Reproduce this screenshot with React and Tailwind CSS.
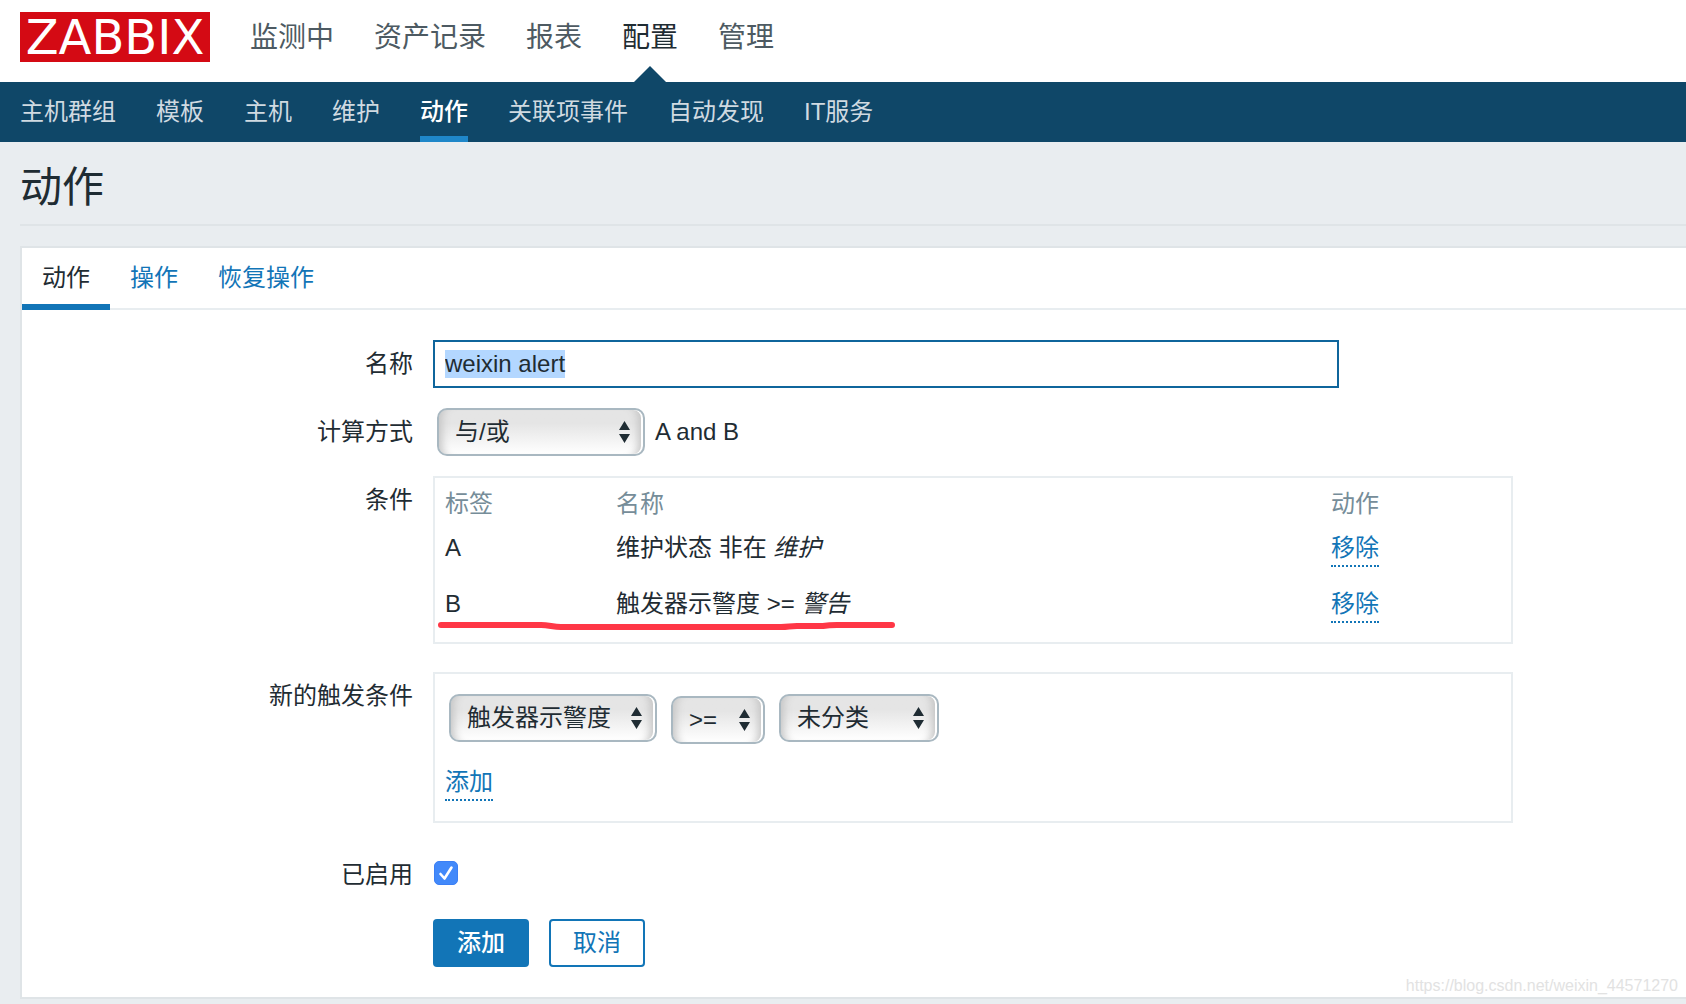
import { useEffect, useRef, useState } from "react";

const mainNav = ["监测中", "资产记录", "报表", "配置", "管理"];
const subNav = ["主机群组", "模板", "主机", "维护", "动作", "关联项事件", "自动发现", "IT服务"];
const tabs = ["动作", "操作", "恢复操作"];
const conditions = [
  { tag: "A", text: "维护状态 非在", value: "维护" },
  { tag: "B", text: "触发器示警度 >=", value: "警告" },
];

function Header() {
  return (
    <header className="bg-white">
      <div className="flex h-[82px] items-start gap-10 px-5">
        <a
          href="#home"
          className="mt-3 flex h-[50px] w-[190px] items-center justify-center bg-[#d40a14] text-[48px] leading-[50px] text-white"
          style={{ fontFamily: '"DejaVu Sans", sans-serif' }}
        >
          ZABBIX
        </a>
        <nav className="flex h-full gap-10 text-[28px] leading-[76px]">
          {mainNav.map((item) => (
            <a
              key={item}
              href="#main"
              className={item === "配置" ? "relative text-[#1f2c33]" : "text-[#4d5a62]"}
            >
              {item}
              {item === "配置" && (
                <svg className="absolute bottom-0 left-1/2 h-4 w-8 -translate-x-1/2" viewBox="0 0 32 16">
                  <path d="M16 0 32 16H0Z" fill="#0f4768" />
                </svg>
              )}
            </a>
          ))}
        </nav>
      </div>
      <nav className="flex h-[60px] gap-10 bg-[#0f4768] px-5 leading-[60px]">
        {subNav.map((item) => (
          <a
            key={item}
            href="#sub"
            className={
              item === "动作"
                ? "border-b-[6px] border-[#1f87c9] font-medium text-white"
                : "text-[#d0dae1]"
            }
          >
            {item}
          </a>
        ))}
      </nav>
    </header>
  );
}

function Row({ id, label, children, className = "" }) {
  return (
    <div className={`flex gap-5 pr-5 ${className}`}>
      <div className="w-[391px] shrink-0 text-right leading-[48px]">
        {label && <label htmlFor={id}>{label}</label>}
      </div>
      <div className="min-w-0 flex-1">{children}</div>
    </div>
  );
}

function Select({ id, label, value, className = "" }) {
  return (
    <span className={`relative block ${className}`}>
      <select
        id={id}
        aria-label={label}
        defaultValue={value}
        className="block h-12 w-full appearance-none rounded-[10px] border-2 border-[#a9b8c1] bg-linear-to-b from-[#e5e5e5] from-30% to-white pl-4 leading-[44px] text-[#1f2c33] shadow-[inset_-2px_0_0_#ffffff,inset_11px_0_8px_-8px_#c4c4c4,inset_-13px_0_8px_-8px_#c4c4c4] outline-none"
      >
        <option>{value}</option>
      </select>
      <svg
        className="pointer-events-none absolute top-[13px] right-[15px] h-[22px] w-[11px]"
        viewBox="0 0 11 22"
        fill="#1f2c33"
      >
        <path d="M5.5 0 11 9H0ZM0 13h11l-5.5 9Z" />
      </svg>
    </span>
  );
}

function DottedButton({ children }) {
  return (
    <button
      type="button"
      className="cursor-pointer border-b-2 border-dotted border-[#1275b7] leading-[34px] text-[#1275b7]"
    >
      {children}
    </button>
  );
}

function Conditions() {
  return (
    <div className="relative max-w-[1080px] border-2 border-[#e8edf0] px-[10px] py-1">
      <table className="w-full table-fixed text-left">
        <thead className="text-[#768d99]">
          <tr className="h-[44px]">
            <th className="w-[171px] font-normal">标签</th>
            <th className="font-normal">名称</th>
            <th className="w-[170px] font-normal">动作</th>
          </tr>
        </thead>
        <tbody>
          {conditions.map((c) => (
            <tr key={c.tag} className="h-[56px] align-top leading-[44px]">
              <td>{c.tag}</td>
              <td>
                {c.text} <em>{c.value}</em>
              </td>
              <td>
                <DottedButton>移除</DottedButton>
              </td>
            </tr>
          ))}
        </tbody>
      </table>
      <svg className="pointer-events-none absolute bottom-2 left-0 h-4 w-[464px]" viewBox="0 0 464 16" fill="none">
        <path
          d="M6 7H106C114 7 118 9 126 9H346C354 9 354 8 362 8H388C394 7 396 7 402 7H457"
          stroke="#ff3746"
          strokeWidth="6"
          strokeLinecap="round"
          strokeLinejoin="round"
        />
      </svg>
    </div>
  );
}

function ActionForm() {
  const nameRef = useRef(null);
  const [enabled, setEnabled] = useState(true);

  useEffect(() => {
    nameRef.current.focus({ preventScroll: true });
    nameRef.current.select();
  }, []);

  return (
    <form className="pt-[30px] pb-[30px]" onSubmit={(e) => e.preventDefault()}>
      <Row id="name" label="名称">
        <input
          id="name"
          ref={nameRef}
          type="text"
          defaultValue="weixin alert"
          className="block h-12 w-full max-w-[906px] border-2 border-[#0f659c] px-[10px] outline-none selection:bg-[#b3d7ff] selection:text-[#1f2c33]"
        />
      </Row>
      <Row id="calc" label="计算方式" className="mt-5">
        <div className="flex items-center gap-[10px] pl-1">
          <Select id="calc" value="与/或" className="w-52" />
          <span>A and B</span>
        </div>
      </Row>
      <Row label="条件" className="mt-5">
        <Conditions />
      </Row>
      <Row id="type" label="新的触发条件" className="mt-7">
        <div className="max-w-[1080px] border-2 border-[#e8edf0] px-[10px] pt-5 pb-5">
          <div className="flex items-start gap-[14px] px-1">
            <Select id="type" value="触发器示警度" className="w-52" />
            <Select label="运算符" value=">=" className="mt-0.5 w-[94px]" />
            <Select label="值" value="未分类" className="w-40" />
          </div>
          <div className="mt-5">
            <DottedButton>添加</DottedButton>
          </div>
        </div>
      </Row>
      <Row id="enabled" label="已启用" className="mt-7">
        <div className="flex h-11 items-center pl-px">
          <span className="relative flex">
            <input
              id="enabled"
              type="checkbox"
              checked={enabled}
              onChange={(e) => setEnabled(e.target.checked)}
              className="size-6 appearance-none rounded-[5px] border border-[#3b7ff5] bg-white checked:bg-[#4289fa]"
            />
            {enabled && (
              <svg
                className="pointer-events-none absolute inset-0 size-6"
                viewBox="0 0 24 24"
                fill="none"
                stroke="#fff"
                strokeWidth="2.6"
                strokeLinecap="round"
                strokeLinejoin="round"
              >
                <path d="M6.5 13 10.5 17.5 17.5 6.5" />
              </svg>
            )}
          </span>
        </div>
      </Row>
      <Row className="mt-5">
        <div className="flex gap-5">
          <button type="submit" className="h-12 w-24 rounded bg-[#1275b7] font-medium text-white">
            添加
          </button>
          <button type="button" className="h-12 w-24 rounded border-2 border-[#1275b7] bg-white text-[#1275b7]">
            取消
          </button>
        </div>
      </Row>
    </form>
  );
}

export default function App() {
  return (
    <div
      className="relative min-h-screen overflow-x-hidden bg-[#e9edf0] text-[24px] leading-[36px] text-[#1f2c33]"
      style={{ fontFamily: '"Liberation Sans", "Noto Sans CJK SC", sans-serif' }}
    >
      <Header />
      <main className="pl-5">
        <h1 className="h-[84px] border-b-2 border-[#dfe4e7] pt-2 text-[42px] leading-[76px]">动作</h1>
        <section className="relative mt-5 border-y-2 border-l-2 border-[#dfe4e7] bg-white">
          <div className="flex h-[62px] leading-[60px] shadow-[inset_0_-2px_0_#e8edf0]">
            {tabs.map((tab) => (
              <a
                key={tab}
                href="#tab"
                className={
                  tab === "动作" ? "border-b-[6px] border-[#1275b7] px-5" : "px-5 text-[#1275b7]"
                }
              >
                {tab}
              </a>
            ))}
          </div>
          <ActionForm />
          <p className="absolute right-2 bottom-0 text-[16px] leading-[22px] text-[#e2e2e2]">
            https://blog.csdn.net/weixin_44571270
          </p>
        </section>
      </main>
    </div>
  );
}
